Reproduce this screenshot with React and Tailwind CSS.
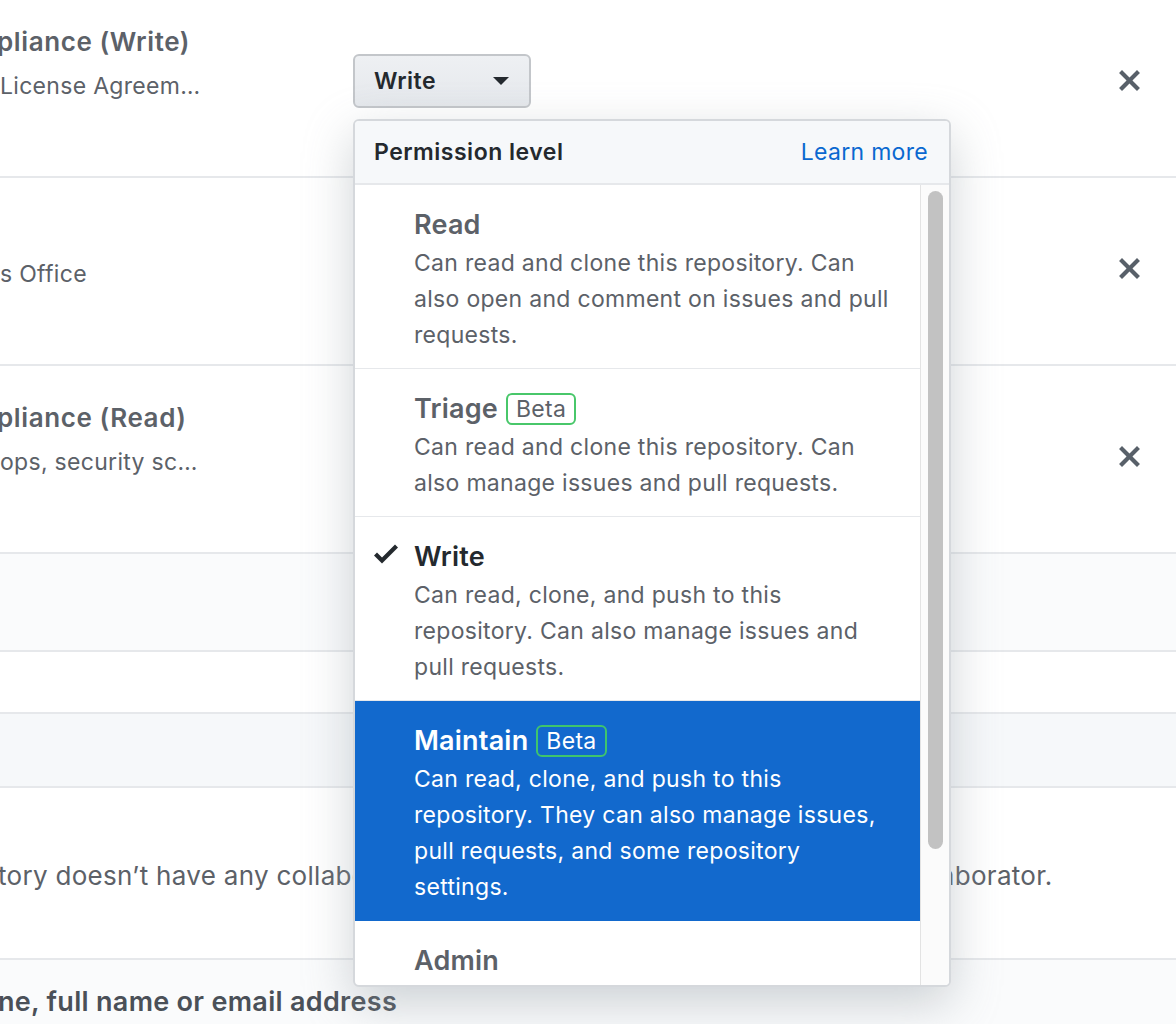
import { Fragment } from "react";

const levels = [
  {
    name: "Read",
    lines: [
      "Can read and clone this repository. Can",
      "also open and comment on issues and pull",
      "requests.",
    ],
  },
  {
    name: "Triage",
    beta: true,
    lines: [
      "Can read and clone this repository. Can",
      "also manage issues and pull requests.",
    ],
  },
  {
    name: "Write",
    checked: true,
    lines: [
      "Can read, clone, and push to this",
      "repository. Can also manage issues and",
      "pull requests.",
    ],
  },
  {
    name: "Maintain",
    beta: true,
    active: true,
    lines: [
      "Can read, clone, and push to this",
      "repository. They can also manage issues,",
      "pull requests, and some repository",
      "settings.",
    ],
  },
  {
    name: "Admin",
    lines: ["Can read, clone, and push to this repository."],
  },
];

const XIcon = () => (
  <svg width="21" height="21" viewBox="0.75 2.75 10.5 10.5" fill="#586069">
    <path d="M7.48 8l3.75 3.75-1.48 1.48L6 9.48l-3.75 3.75-1.48-1.48L4.52 8 .77 4.25l1.48-1.48L6 6.52l3.75-3.75 1.48 1.48L7.48 8z" />
  </svg>
);

const CheckIcon = () => (
  <svg width="24" height="20" viewBox="0 3.5 12 9.5" fill="#24292e">
    <path d="M12 5l-8 8-4-4 1.5-1.5L4 10l6.5-6.5L12 5z" />
  </svg>
);

const RoleButton = () => (
  <div className="flex h-[54px] w-[178px] items-center justify-between rounded-[6px] border-2 border-[#c3c6ca] bg-[linear-gradient(180deg,#eef0f3,#e5e8ec)] pl-[19px] pr-[20px]">
    <span className="text-[23px] tracking-[0.5px] font-semibold text-[#24292e]">Write</span>
    <span className="h-0 w-0 border-x-[8px] border-t-[8px] border-x-transparent border-t-[#24292e]" />
  </div>
);

const MemberRow = ({ title, subtitle }) => (
  <div className="flex h-[188px] items-start border-b-2 border-[#e6e8eb]">
    <div className="w-[353px] shrink-0 -ml-[3px] pt-[34px] whitespace-nowrap">
      <p className="h-[36px] text-[26px] leading-[36px] tracking-[0.6px] font-semibold text-[#5c6168]">
        {title}
      </p>
      <p className="mt-[8px] pl-[3px] text-[23px] leading-[36px] tracking-[0.3px] text-[#5c6168]">
        {subtitle}
      </p>
    </div>
    <div className="flex-1 pl-[3px] pt-[64px]">
      <RoleButton />
    </div>
    <div className="pt-[80px] pr-[36px]">
      <XIcon />
    </div>
  </div>
);

const PermissionMenu = () => (
  <div className="absolute left-[353px] top-[119px] flex h-[868px] w-[598px] flex-col overflow-hidden rounded-[6px] border-2 border-[#d5d8dc] bg-white shadow-[0_16px_48px_rgba(149,157,165,0.45)]">
    {/* header */}
    <div className="flex h-[64px] shrink-0 items-center justify-between border-b-2 border-[#e6e8eb] bg-[#f6f8fa] pl-[19px] pr-[21px]">
      <span className="text-[23px] tracking-[0.5px] font-semibold text-[#24292e]">Permission level</span>
      <span className="text-[23px] tracking-[0.3px] text-[#0a68d0]">Learn more</span>
    </div>

    <div className="flex min-h-0 flex-1">
      <div className="w-[565px] shrink-0 overflow-hidden">
        {levels.map((l) => (
          <div
            key={l.name}
            className={
              l.active
                ? "flex bg-[#1269cd] pt-[22px] pb-[16px] text-white"
                : "flex border-b border-[#e6e8eb] pt-[22px] pb-[15px]"
            }
          >
            <div className="w-[59px] shrink-0 pl-[19px] pt-[5px]">
              {l.checked && <CheckIcon />}
            </div>
            <div className="whitespace-nowrap">
              <div className="mb-[2px] flex h-[36px] items-center gap-[8px]">
                <span
                  className={
                    l.active
                      ? "text-[27px] tracking-[0.2px] font-semibold text-white"
                      : l.checked
                      ? "text-[27px] tracking-[0.2px] font-semibold text-[#24292e]"
                      : "text-[27px] tracking-[0.2px] font-semibold text-[#5c6168]"
                  }
                >
                  {l.name}
                </span>
                {l.beta && (
                  <span
                    className={
                      l.active
                        ? "flex h-[32px] items-center rounded-[6px] border-2 border-[#3fc46c] px-[8px] text-[23px] tracking-[0.3px] text-white"
                        : "flex h-[32px] items-center rounded-[6px] border-2 border-[#48c76a] px-[8px] text-[23px] tracking-[0.3px] text-[#5c6168]"
                    }
                  >
                    Beta
                  </span>
                )}
              </div>
              <p
                className={
                  l.active
                    ? "text-[23px] leading-[36px] tracking-[0.3px] text-white"
                    : "text-[23px] leading-[36px] tracking-[0.3px] text-[#5c6168]"
                }
              >
                {l.lines.map((line, i) => (
                  <Fragment key={i}>
                    {line}
                    {i < l.lines.length - 1 && <br />}
                  </Fragment>
                ))}
              </p>
            </div>
          </div>
        ))}
      </div>
      {/* scrollbar */}
      <div className="flex-1 border-l border-[#e3e3e3] bg-[#fbfbfb] pl-[7px] pt-[6px]">
        <div className="h-[658px] w-[15px] rounded-full bg-[#c2c2c2]" />
      </div>
    </div>
  </div>
);

export default function App() {
  return (
    <div className="relative h-[1024px] w-[1176px] overflow-hidden bg-white font-['Inter',sans-serif] antialiased">
      <div className="-mt-[10px]">
        <MemberRow title="pliance (Write)" subtitle="License Agreem…" />
        <MemberRow title="" subtitle="s Office" />
        <MemberRow title="pliance (Read)" subtitle="ops, security sc…" />
      </div>

      <div className="h-[98px] border-b-2 border-[#e6e8eb] bg-[#fafbfc]" />
      <div className="h-[62px] border-b-2 border-[#e6e8eb] bg-white" />
      <div className="h-[74px] border-b-2 border-[#e6e8eb] bg-[#f6f8fa]" />

      <div className="flex h-[172px] items-center border-b-2 border-[#e6e8eb] bg-white">
        <p className="-ml-[2px] whitespace-nowrap pt-[4px] text-[26px] tracking-[0.3px] text-[#5c6168]">
          tory doesn’t have any collab
          <span className="[word-spacing:3.3px]">orators yet. Use the form below to add a colla</span>
          borator.
        </p>
      </div>

      <div className="h-[80px] bg-[#fafbfc] pt-[24px]">
        <p className="-ml-[2px] whitespace-nowrap text-[27px] leading-[36px] tracking-[0.3px] font-semibold text-[#4a5058]">
          ne, full name or email address
        </p>
      </div>

      <PermissionMenu />
    </div>
  );
}
